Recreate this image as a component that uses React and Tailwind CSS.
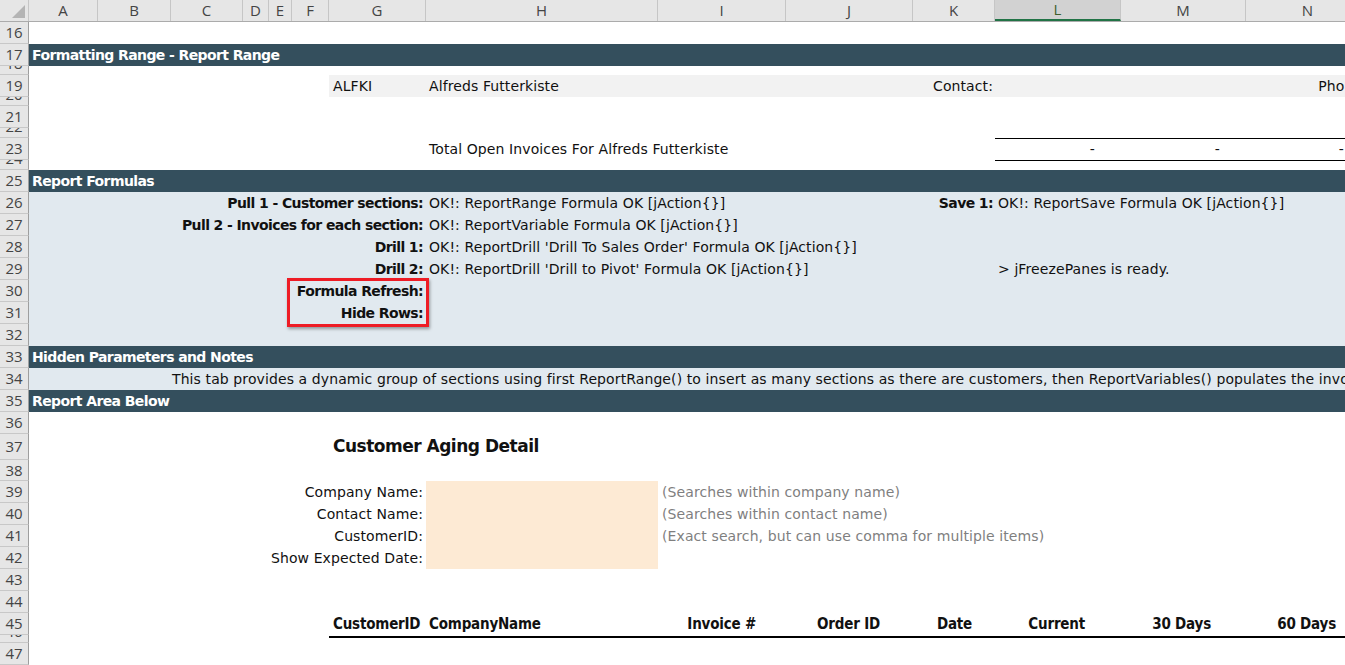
import React from "react";

const colHeads = [
  ["A", "w-[69px]"],
  ["B", "w-[73px]"],
  ["C", "w-[72px]"],
  ["D", "w-[26px]"],
  ["E", "w-[23px]"],
  ["F", "w-[37px]"],
  ["G", "w-[97px]"],
  ["H", "w-[232px]"],
  ["I", "w-[128px]"],
  ["J", "w-[127px]"],
  ["K", "w-[82px]"],
  ["L", "w-[126px]"],
  ["M", "w-[125px]"],
  ["N", "w-[124px]"],
];

const GRID =
  "grid grid-cols-[69px_73px_72px_26px_23px_37px_97px_232px_128px_127px_82px_126px_125px_124px]";

function Row({ n, h = "h-[22px]", bg = "", small = false, children }) {
  return (
    <div className={`flex shrink-0 ${h}`}>
      <div
        className={`w-[29px] shrink-0 bg-[#e6e6e6] border-r border-b border-r-[#9e9e9e] border-b-[#c8c8c8] text-[#444] text-[15px] tracking-normal font-['Open_Sans',sans-serif] flex justify-center overflow-hidden ${
          small ? "items-end" : "items-center"
        }`}
      >
        <span className={small ? "leading-[22px]" : "leading-none"}>{n}</span>
      </div>
      <div className={`${GRID} flex-1 ${bg}`}>{children}</div>
    </div>
  );
}

function Band({ n, title }) {
  return (
    <Row n={n} bg="bg-[#344f5d]">
      <div className="col-start-1 col-span-14 flex items-center pl-[3px] text-white font-bold tracking-[-0.6px] whitespace-nowrap">
        {title}
      </div>
    </Row>
  );
}

function FormulaRow({ n, label, value, right }) {
  return (
    <Row n={n} bg="bg-[#e1e9ef]">
      <div className="col-start-1 col-span-7 flex items-center justify-end pr-[3px] font-bold tracking-[-0.6px] whitespace-nowrap">
        {label}
      </div>
      <div className="col-start-8 col-span-3 flex items-center pl-[3px] whitespace-nowrap">
        {value}
      </div>
      {right}
    </Row>
  );
}

function InputRow({ n, label, hint }) {
  return (
    <Row n={n}>
      <div className="col-start-1 col-span-7 flex items-center justify-end pr-[3px] whitespace-nowrap">
        {label}
      </div>
      <div className="col-start-8 bg-[#fdead4]" />
      <div className="col-start-9 col-span-4 flex items-center pl-[4px] text-[#7f7f7f] whitespace-nowrap">
        {hint}
      </div>
    </Row>
  );
}

export default function App() {
  return (
    <div className="relative w-[1345px] h-[665px] overflow-hidden bg-white text-[14px] tracking-[0.1px] text-[#111] font-['DejaVu_Sans',sans-serif] flex flex-col">
      {/* column headers */}
      <div className="flex h-[22px] shrink-0 bg-[#e6e6e6] border-b border-[#ababab] font-['Open_Sans',sans-serif] text-[15px] tracking-normal text-[#444]">
        <div className="w-[29px] shrink-0 relative border-r border-[#c6c6c6]">
          <svg className="absolute right-[3px] bottom-[3px]" width="13" height="13" viewBox="0 0 13 13">
            <polygon points="13,0 13,13 0,13" fill="#b4b4b4" />
          </svg>
        </div>
        {colHeads.map(([c, w]) =>
          c === "L" ? (
            <div
              key={c}
              className={`${w} shrink-0 flex items-center justify-center bg-[#d2d2d2] border-r border-[#c6c6c6] border-b-2 border-b-[#217346] text-[#3f5f2e]`}
            >
              {c}
            </div>
          ) : (
            <div key={c} className={`${w} shrink-0 flex items-center justify-center border-r border-[#c6c6c6]`}>
              {c}
            </div>
          )
        )}
      </div>

      <Row n="16" />
      <Band n="17" title="Formatting Range - Report Range" />
      <Row n="18" h="h-[9px]" small />
      <Row n="19">
        <div className="col-start-7 col-span-8 bg-[#f2f2f2] grid grid-cols-[97px_232px_128px_127px_82px_126px_125px_124px]">
          <div className="flex items-center pl-[4px]">ALFKI</div>
          <div className="flex items-center pl-[3px] whitespace-nowrap">Alfreds Futterkiste</div>
          <div />
          <div />
          <div className="flex items-center justify-end pr-[2px]">Contact:</div>
          <div />
          <div />
          <div className="flex items-center justify-end pr-[3px]">Phone:</div>
        </div>
      </Row>
      <Row n="20" h="h-[9px]" small />
      <Row n="21" />
      <Row n="22" h="h-[10px]" small />
      <Row n="23">
        <div className="col-start-8 col-span-3 flex items-center pl-[3px] whitespace-nowrap">
          Total Open Invoices For Alfreds Futterkiste
        </div>
        <div className="col-start-12 border-y border-black flex items-center justify-end pr-[26px]">-</div>
        <div className="col-start-13 border-y border-black flex items-center justify-end pr-[26px]">-</div>
        <div className="col-start-14 border-y border-black flex items-center justify-end pr-[26px]">-</div>
      </Row>
      <Row n="24" h="h-[10px]" small />
      <Band n="25" title="Report Formulas" />
      <FormulaRow
        n="26"
        label="Pull 1 - Customer sections:"
        value="OK!: ReportRange Formula OK [jAction{}]"
        right={
          <>
            <div className="col-start-11 flex items-center justify-end pr-[2px] font-bold tracking-[-0.6px] whitespace-nowrap">
              Save 1:
            </div>
            <div className="col-start-12 col-span-3 flex items-center pl-[3px] whitespace-nowrap">
              OK!: ReportSave Formula OK [jAction{"{}"}]
            </div>
          </>
        }
      />
      <FormulaRow n="27" label="Pull 2 - Invoices for each section:" value="OK!: ReportVariable Formula OK [jAction{}]" />
      <FormulaRow n="28" label="Drill 1:" value="OK!: ReportDrill 'Drill To Sales Order' Formula OK [jAction{}]" />
      <FormulaRow
        n="29"
        label="Drill 2:"
        value="OK!: ReportDrill 'Drill to Pivot' Formula OK [jAction{}]"
        right={
          <div className="col-start-12 col-span-3 flex items-center pl-[3px] whitespace-nowrap">
            &gt; jFreezePanes is ready.
          </div>
        }
      />
      <FormulaRow n="30" label="Formula Refresh:" value="" />
      <FormulaRow n="31" label="Hide Rows:" value="" />
      <Row n="32" bg="bg-[#e1e9ef]" />
      <Band n="33" title="Hidden Parameters and Notes" />
      <Row n="34" bg="bg-[#e1e9ef]">
        <div className="col-start-3 col-span-12 flex items-center pl-[1px] whitespace-nowrap">
          This tab provides a dynamic group of sections using first ReportRange() to insert as many sections as there are
          customers, then ReportVariables() populates the invoices for each customer section.
        </div>
      </Row>
      <Band n="35" title="Report Area Below" />
      <Row n="36" />
      <Row n="37" h="h-[26px]">
        <div className="col-start-7 col-span-4 flex items-center pl-[4px] font-bold text-[17px] tracking-[-0.5px] whitespace-nowrap">
          Customer Aging Detail
        </div>
      </Row>
      <Row n="38" h="h-[21px]" />
      <InputRow n="39" label="Company Name:" hint="(Searches within company name)" />
      <InputRow n="40" label="Contact Name:" hint="(Searches within contact name)" />
      <InputRow n="41" label="CustomerID:" hint="(Exact search, but can use comma for multiple items)" />
      <InputRow n="42" label="Show Expected Date:" hint="" />
      <Row n="43" />
      <Row n="44" />
      <Row n="45">
        <div className="col-start-7 col-span-8 border-b-2 border-black grid grid-cols-[97px_232px_128px_127px_82px_126px_125px_124px] font-['DejaVu_Sans_Condensed','DejaVu_Sans',sans-serif] font-bold text-[15px] tracking-[-0.2px]">
          <div className="flex items-center pl-[4px] whitespace-nowrap">CustomerID</div>
          <div className="flex items-center pl-[3px] whitespace-nowrap">CompanyName</div>
          <div className="flex items-center justify-end pr-[30px] whitespace-nowrap">Invoice #</div>
          <div className="flex items-center justify-end pr-[33px] whitespace-nowrap">Order ID</div>
          <div className="flex items-center justify-end pr-[23px] whitespace-nowrap">Date</div>
          <div className="flex items-center justify-end pr-[36px] whitespace-nowrap">Current</div>
          <div className="flex items-center justify-end pr-[35px] whitespace-nowrap">30 Days</div>
          <div className="flex items-center justify-end pr-[34px] whitespace-nowrap">60 Days</div>
        </div>
      </Row>
      <Row n="46" h="h-[8px]" small />
      <Row n="47" />

      {/* annotation box */}
      <div className="absolute left-[287px] top-[278px] w-[142px] h-[49px] border-[3px] border-[#ee1c25] shadow-[1px_2px_3px_rgba(0,0,0,0.35)]" />
    </div>
  );
}
